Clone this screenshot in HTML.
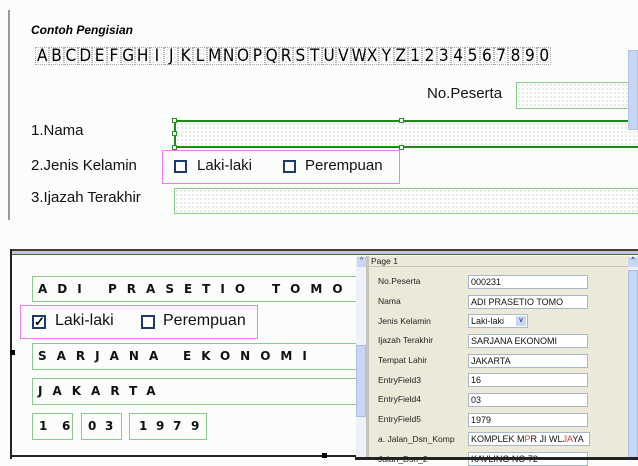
<!DOCTYPE html>
<html><head><meta charset="utf-8"><style>
*{margin:0;padding:0;box-sizing:border-box}
body{width:638px;height:460px;background:#fbfdfb;position:relative;overflow:hidden;font-family:"Liberation Sans",sans-serif}
.a{position:absolute}
.dot{background-image:radial-gradient(#d0d0d0 0.6px,transparent 0.9px);background-size:4px 4px}
.gb{border:1px solid #8cc98c}
.cb{width:12px;height:12px;border:2px solid #1e3a6a;background:#fff}
.lbl{font-size:15px;color:#111}
.hw{position:absolute;font-family:"DejaVu Sans",sans-serif;font-size:12px;font-weight:bold;color:#111;white-space:pre;letter-spacing:10px}
.fl{font-size:8.5px;color:#222}
.in{background:#fff;border:1px solid #a8b8cc;height:14px;font-size:9px;padding-left:2px;line-height:12px;color:#111}
</style></head><body>
<div class="a" style="left:8px;top:10px;width:2px;height:210px;background:#999"></div>
<div class="a" style="left:31px;top:23px;font-size:12px;font-weight:bold;font-style:italic">Contoh Pengisian</div>
<div class="a" style="left:35px;top:47px;display:flex">
<script>document.write("ABCDEFGHIJKLMNOPQRSTUVWXYZ1234567890".split("").map(c=>'<div class="dot" style="width:14.35px;height:18px;border:1px dotted #aaa;font-size:17px;line-height:17px;text-align:center;font-family:\'DejaVu Sans Condensed\',sans-serif">'+c+'</div>').join(""))</script>
</div>
<div class="a lbl" style="left:427px;top:85px">No.Peserta</div>
<div class="a gb dot" style="left:516px;top:82px;width:130px;height:27px"></div>
<div class="a lbl" style="left:31px;top:122px">1.Nama</div>
<div class="a dot" style="left:174px;top:120px;width:470px;height:28px;border-top:2px solid #1e8a1e;border-bottom:2px solid #1e8a1e;border-left:2px solid #1e8a1e"></div>
<div class="a" style="left:172px;top:118px;width:5px;height:5px;border:1px solid #2a8a2a;background:#fff"></div>
<div class="a" style="left:172px;top:131px;width:5px;height:5px;border:1px solid #2a8a2a;background:#fff"></div>
<div class="a" style="left:172px;top:145px;width:5px;height:5px;border:1px solid #2a8a2a;background:#fff"></div>
<div class="a" style="left:399px;top:118px;width:5px;height:5px;border:1px solid #2a8a2a;background:#fff"></div>
<div class="a" style="left:399px;top:145px;width:5px;height:5px;border:1px solid #2a8a2a;background:#fff"></div>
<div class="a lbl" style="left:31px;top:157px">2.Jenis Kelamin</div>
<div class="a" style="left:162px;top:150px;width:238px;height:34px;border:1px solid #f07cf0"></div>
<div class="a cb" style="left:174px;top:160px;width:13px;height:13px"></div>
<div class="a lbl" style="left:197px;top:157px">Laki-laki</div>
<div class="a cb" style="left:283px;top:160px;width:13px;height:13px"></div>
<div class="a lbl" style="left:305px;top:157px">Perempuan</div>
<div class="a lbl" style="left:31px;top:189px">3.Ijazah Terakhir</div>
<div class="a gb dot" style="left:174px;top:188px;width:470px;height:26px"></div>
<div class="a" style="left:628px;top:50px;width:10px;height:80px;background:#c6d6f4;border:1px solid #b0c4ea"></div>

<div class="a" style="left:10px;top:249px;width:628px;height:6px;background:#b8c8e4;border-top:2px solid #4a3a20;border-bottom:1px solid #6a5a40"></div>
<div class="a" style="left:10px;top:249px;width:2px;height:210px;background:#222"></div>
<div class="a" style="left:10px;top:455px;width:355px;height:2px;background:#222"></div>
<div class="a" style="left:10px;top:350px;width:5px;height:5px;background:#000"></div>
<div class="a" style="left:322px;top:453px;width:5px;height:5px;background:#000"></div>
<div class="a gb" style="left:32px;top:276px;width:330px;height:26px"></div>
<div class="hw" style="left:38px;top:282px">ADI</div>
<div class="hw" style="left:108px;top:282px">PRASETIO</div>
<div class="hw" style="left:272px;top:282px">TOMO</div>
<div class="a" style="left:20px;top:305px;width:238px;height:34px;border:1px solid #f07cf0"></div>
<div class="a cb" style="left:32px;top:315px;width:14px;height:14px;font-size:13px;line-height:10px;font-weight:bold;text-align:center;color:#000">✓</div>
<div class="a lbl" style="left:55px;top:312px;font-size:16px">Laki-laki</div>
<div class="a cb" style="left:141px;top:315px;width:14px;height:14px"></div>
<div class="a lbl" style="left:163px;top:312px;font-size:16px">Perempuan</div>
<div class="a gb" style="left:32px;top:343px;width:330px;height:27px"></div>
<div class="hw" style="left:38px;top:349px">SARJANA</div>
<div class="hw" style="left:183px;top:349px">EKONOMI</div>
<div class="a gb" style="left:32px;top:378px;width:330px;height:27px"></div>
<div class="hw" style="left:38px;top:384px">JAKARTA</div>
<div class="a gb" style="left:32px;top:413px;width:41px;height:27px"></div>
<div class="hw" style="left:39px;top:419px">1</div><div class="hw" style="left:62px;top:419px">6</div>
<div class="a gb" style="left:81px;top:413px;width:41px;height:27px"></div>
<div class="hw" style="left:88px;top:419px">0</div><div class="hw" style="left:105px;top:419px">3</div>
<div class="a gb" style="left:129px;top:413px;width:78px;height:27px"></div>
<div class="hw" style="left:139px;top:419px">1</div><div class="hw" style="left:156px;top:419px">9</div><div class="hw" style="left:173px;top:419px">7</div><div class="hw" style="left:191px;top:419px">9</div>
<div class="a" style="left:356px;top:256px;width:11px;height:204px;background:#eef2f8"></div>
<div class="a" style="left:357px;top:257px;width:9px;height:10px;background:#c6d6f4;font-size:7px;text-align:center;color:#335">^</div>
<div class="a" style="left:356px;top:345px;width:10px;height:72px;background:#c6d6f4;border:1px solid #a8bce6"></div>
<div class="a" style="left:366px;top:256px;width:3px;height:204px;background:#c8c4b8"></div>
<div class="a" style="left:369px;top:256px;width:259px;height:204px;background:#ece9d8"></div>
<div class="a" style="left:369px;top:266px;width:259px;height:1px;background:#c8c4b0"></div>
<div class="a" style="left:371px;top:256px;font-size:8.5px;color:#222">Page 1</div>
<div class="a" style="left:628px;top:256px;width:10px;height:204px;background:#eef2f8"></div>
<div class="a" style="left:628px;top:257px;width:10px;height:10px;background:#c6d6f4;font-size:7px;text-align:center">^</div>
<div class="a" style="left:628px;top:270px;width:10px;height:190px;background:#c6d6f4;border:1px solid #a8bce6"></div>

<div class="a fl" style="left:378px;top:276px">No.Peserta</div><div class="a in" style="left:468px;top:275px;width:120px">000231</div>
<div class="a fl" style="left:378px;top:296px">Nama</div><div class="a in" style="left:468px;top:295px;width:120px">ADI PRASETIO TOMO</div>
<div class="a fl" style="left:378px;top:316px">Jenis Kelamin</div><div class="a in" style="left:468px;top:314px;width:60px">Laki-laki<span style="position:absolute;right:1px;top:1px;width:10px;height:10px;background:#c6d6f4;font-size:7px;text-align:center;line-height:10px">v</span></div>
<div class="a fl" style="left:378px;top:335px">Ijazah Terakhir</div><div class="a in" style="left:468px;top:334px;width:120px">SARJANA EKONOMI</div>
<div class="a fl" style="left:378px;top:355px">Tempat Lahir</div><div class="a in" style="left:468px;top:354px;width:120px">JAKARTA</div>
<div class="a fl" style="left:378px;top:375px">EntryField3</div><div class="a in" style="left:468px;top:373px;width:120px">16</div>
<div class="a fl" style="left:378px;top:394px">EntryField4</div><div class="a in" style="left:468px;top:393px;width:120px">03</div>
<div class="a fl" style="left:378px;top:414px">EntryField5</div><div class="a in" style="left:468px;top:413px;width:120px">1979</div>
<div class="a fl" style="left:378px;top:434px">a. Jalan_Dsn_Komp</div><div class="a in" style="left:468px;top:432px;width:122px">KOMPLEK M<span style="color:#e33">P</span>R JI WL<span style="color:#e33">JA</span>YA</div>
<div class="a fl" style="left:378px;top:454px">Jalan_Dsn_2</div><div class="a in" style="left:468px;top:452px;width:120px">KAVLING NO 72</div>
<div class="a" style="left:355px;top:457px;width:283px;height:3px;background:#222"></div>
</body></html>
